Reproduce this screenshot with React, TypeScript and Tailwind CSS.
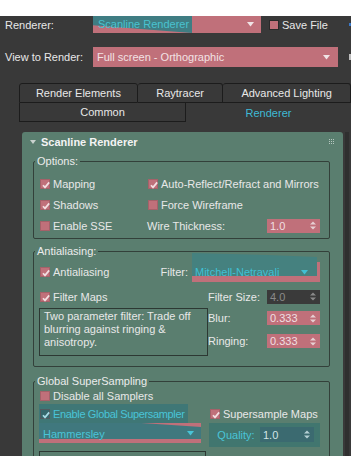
import React from 'react';

const PINK = 'bg-[#c0707a]';

const Tick = ({ color = '#f3dfe2' }: { color?: string }) => (
  <svg width="10" height="10" viewBox="0 0 10 10" className="block">
    <path d="M2 5.2 L4 7.4 L8.2 2.4" fill="none" stroke={color} strokeWidth="1.7" />
  </svg>
);

const Box = ({ on = false, teal = false }: { on?: boolean; teal?: boolean }) => (
  <span className={`w-[10px] h-[10px] shrink-0 ${teal ? 'bg-[#35676c]' : PINK} border border-[#7c4a50]/40`}>
    {on && <Tick color={teal ? '#a8dbe6' : '#f3dfe2'} />}
  </span>
);

const Check = ({ on = false, label }: { on?: boolean; label: string }) => (
  <div className="flex items-center gap-[3px] whitespace-nowrap">
    <Box on={on} />
    <span>{label}</span>
  </div>
);

const Arrows = ({ color = '#dcc0c4' }: { color?: string }) => (
  <svg width="6" height="9" viewBox="0 0 6 9" className="block">
    <path d="M0 3.5 L3 0.5 L6 3.5 Z M0 5.5 L3 8.5 L6 5.5 Z" fill={color} />
  </svg>
);

const Down = ({ color = '#f0e4e6' }: { color?: string }) => (
  <svg width="7" height="5" viewBox="0 0 7 5" className="block">
    <path d="M0 0 L7 0 L3.5 4.5 Z" fill={color} />
  </svg>
);

const Spinner = ({ value, dim = false }: { value: string; dim?: boolean }) => (
  <div
    className={`w-[53px] h-[14px] flex items-center justify-between pl-[3px] pr-[4px] ${
      dim ? 'bg-[#3a3a3a] text-[#8a8a8a]' : `${PINK} text-[#f0dfe1]`
    }`}
  >
    <span>{value}</span>
    <Arrows color={dim ? '#8a8a8a' : '#e6d0d3'} />
  </div>
);

const Group = ({ title, className = '', children }: { title: string; className?: string; children: React.ReactNode }) => (
  <fieldset className={`ml-[11px] w-[297px] border border-[#33403a] rounded-[2px] pl-[6px] pr-[9px] ${className}`}>
    <legend className="ml-[-5px] px-[2px] leading-[14px] text-[#ececec]">{title}</legend>
    {children}
  </fieldset>
);

export default function App() {
  return (
    <div className="w-[351px] h-[456px] overflow-hidden bg-[#393939] text-[11px] leading-[14px] text-[#e8e8e8] font-['Liberation_Sans',Arial,sans-serif]">
      <div className="h-4 bg-white" />

      {/* Renderer row */}
      <div className="flex items-center h-[17px]">
        <span className="w-[93px] pl-[5px]">Renderer:</span>
        <div className={`relative w-[168px] h-[17px] ${PINK} flex items-center justify-end pr-[7px]`}>
          <div className="absolute left-0 top-0 w-[99px] h-[17px] bg-[#3f7d83] [clip-path:polygon(0_0,100%_0,100%_100%,0_55%)]" />
          <span className="absolute left-[5px] top-[1px] text-[#49c3d0]">Scanline Renderer</span>
          <Down />
        </div>
        <div className="ml-[8px] flex items-center gap-[3px]">
          <span className={`w-[10px] h-[10px] ${PINK} border border-[#2a2a2a]`} />
          <span>Save File</span>
        </div>
        <span className="ml-auto w-[2px] h-[3px] bg-[#3a78c8]" />
      </div>

      {/* View to render */}
      <div className="mt-[14px] flex items-center h-[20px]">
        <span className="w-[93px] pl-[5px]">View to Render:</span>
        <div className={`w-[245px] h-[20px] ${PINK} flex items-center justify-between pl-[4px] pr-[8px] text-[#f2e2e4]`}>
          <span>Full screen - Orthographic</span>
          <Down />
        </div>
        <span className="ml-auto w-[2px] h-[6px] bg-[#bdbdbd]" />
      </div>

      {/* Tabs */}
      <div className="mt-[16px] pl-[19px]">
        <div className="flex h-[20px]">
          <div className="w-[121px] border border-[#1c1c1c] rounded-t-[3px] flex items-center justify-center">Render Elements</div>
          <div className="w-[87px] border border-l-0 border-[#1c1c1c] rounded-t-[3px] flex items-center justify-center">Raytracer</div>
          <div className="w-[130px] border border-l-0 border-[#1c1c1c] rounded-t-[3px] flex items-center justify-center">Advanced Lighting</div>
        </div>
        <div className="flex h-[19px]">
          <div className="w-[167px] border border-t-0 border-[#1c1c1c] flex items-center justify-center">Common</div>
          <div className="w-[165px] flex items-center justify-center text-[#3fbad6]">Renderer</div>
        </div>
      </div>

      {/* Rollout area */}
      <div className="mt-[10px] flex pl-[22px]">
        <div className="w-[321px] h-[330px] bg-[#5a7e6f] rounded-t-[3px]">
          <div className="h-[20px] flex items-center pl-[8px] pr-[8px]">
            <svg width="6" height="4" viewBox="0 0 6 4" className="block">
              <path d="M0 0 L6 0 L3 4 Z" fill="#c9d3cf" />
            </svg>
            <span className="ml-[5px] font-bold text-[#f4f4f4]">Scanline Renderer</span>
            <svg width="6" height="6" viewBox="0 0 6 6" className="ml-auto block">
              {[0, 2, 4].map((y) => [0, 2, 4].map((x) => <rect key={`${x}-${y}`} x={x} y={y} width="1" height="1" fill="#b5c6bf" />))}
            </svg>
          </div>

          {/* Options */}
          <Group title="Options:" className="mt-[2px] pb-[2px]">
            <div className="mt-[5px]">
              <div className="flex items-center h-[21px]">
                <div className="w-[107px]"><Check on label="Mapping" /></div>
                <div className="pl-px"><Check on label="Auto-Reflect/Refract and Mirrors" /></div>
              </div>
              <div className="flex items-center h-[21px]">
                <div className="w-[107px]"><Check on label="Shadows" /></div>
                <div className="pl-px"><Check label="Force Wireframe" /></div>
              </div>
              <div className="flex items-center h-[21px]">
                <div className="w-[107px]"><Check label="Enable SSE" /></div>
                <div className="w-[173px] flex items-center justify-between">
                  <span>Wire Thickness:</span>
                  <Spinner value="1.0" />
                </div>
              </div>
            </div>
          </Group>

          {/* Antialiasing */}
          <Group title="Antialiasing:" className="mt-[5px] pb-[10px]">
            <div className="mt-[4px] w-[280px] flex items-center justify-between h-[20px]">
              <Check on label="Antialiasing" />
              <div className="flex items-center">
                <span className="mr-[4px]">Filter:</span>
                <div className={`relative w-[128px] h-[20px] ${PINK}`}>
                  <div className="absolute left-0 top-[-9px] right-[3px] bottom-[6px] bg-[#45817f] [clip-path:polygon(0_0,60%_2px,100%_4px,100%_100%,0_100%)]" />
                  <div className="absolute left-0 top-[3px] right-[9px] flex items-center justify-between pl-[3px] pr-[3px] h-[14px] text-[#3fc0d4]">
                    <span>Mitchell-Netravali</span>
                    <Down color="#3fc0d4" />
                  </div>
                </div>
              </div>
            </div>
            <div className="mt-[5px] w-[280px] flex items-center h-[19px]">
              <div className="w-[168px]"><Check on label="Filter Maps" /></div>
              <div className="flex-1 flex items-center justify-between">
                <span>Filter Size:</span>
                <Spinner value="4.0" dim />
              </div>
            </div>
            <div className="mt-[2px] w-[280px] flex">
              <div className="ml-[-1px] w-[169px] h-[48px] border border-[#2d3833] pl-[4px] pt-[1px] leading-[13px]">
                Two parameter filter: Trade off
                <br />
                blurring against ringing &amp;
                <br />
                anisotropy.
              </div>
              <div className="flex-1 pt-[3px]">
                <div className="flex items-center justify-between">
                  <span>Blur:</span>
                  <Spinner value="0.333" />
                </div>
                <div className="mt-[9px] flex items-center justify-between">
                  <span>Ringing:</span>
                  <Spinner value="0.333" />
                </div>
              </div>
            </div>
          </Group>

          {/* Global SuperSampling */}
          <Group title="Global SuperSampling" className="mt-[7px] pb-[10px]">
            <div className="h-[15px] flex items-center">
              <Check label="Disable all Samplers" />
            </div>
            <div className="mt-px w-[280px] flex items-center h-[19px]">
              <div className="w-[168px]">
                <div className="ml-[-1px] w-[149px] h-[19px] bg-[#3f7776] flex items-center gap-[3px] pl-px text-[#49c4d8] whitespace-nowrap tracking-[-0.35px]">
                  <Box on teal />
                  <span>Enable Global Supersampler</span>
                </div>
              </div>
              <div className="pl-[2px]"><Check on label="Supersample Maps" /></div>
            </div>
            <div className="w-[280px] flex items-center h-[20px]">
              <div className="relative ml-[-1px] w-[166px] h-[20px] bg-[#40787e] border-b-[4px] border-[#c0707a] flex items-center justify-between pl-[4px] pr-[7px] text-[#49c4d8]">
                <div className="absolute right-0 top-0 w-[60px] h-[4px] bg-[#c0707a] [clip-path:polygon(0_0,100%_0,100%_100%)]" />
                <span className="mt-[5px]">Hammersley</span>
                <span className="mt-[5px]"><Down color="#49c4d8" /></span>
              </div>
              <div className="ml-[8px] w-[113px] h-[24px] mt-[3px] bg-[#41766f] flex items-center pl-[8px] pr-[6px] text-[#49c4d8]">
                <span>Quality:</span>
                <div className="ml-auto w-[54px] h-[15px] bg-[#3b6a70] flex items-center justify-between pl-[3px] pr-[4px] text-[#d2e4e6]">
                  <span>1.0</span>
                  <Arrows color="#b4cfd3" />
                </div>
              </div>
            </div>
            <div className="mt-[8px] ml-[-1px] w-[167px] h-[20px] border border-[#2d3833]" />
          </Group>
        </div>
        <div className="ml-[2px] w-[4px] h-[330px] bg-[#2f2f2f]" />
      </div>
    </div>
  );
}
